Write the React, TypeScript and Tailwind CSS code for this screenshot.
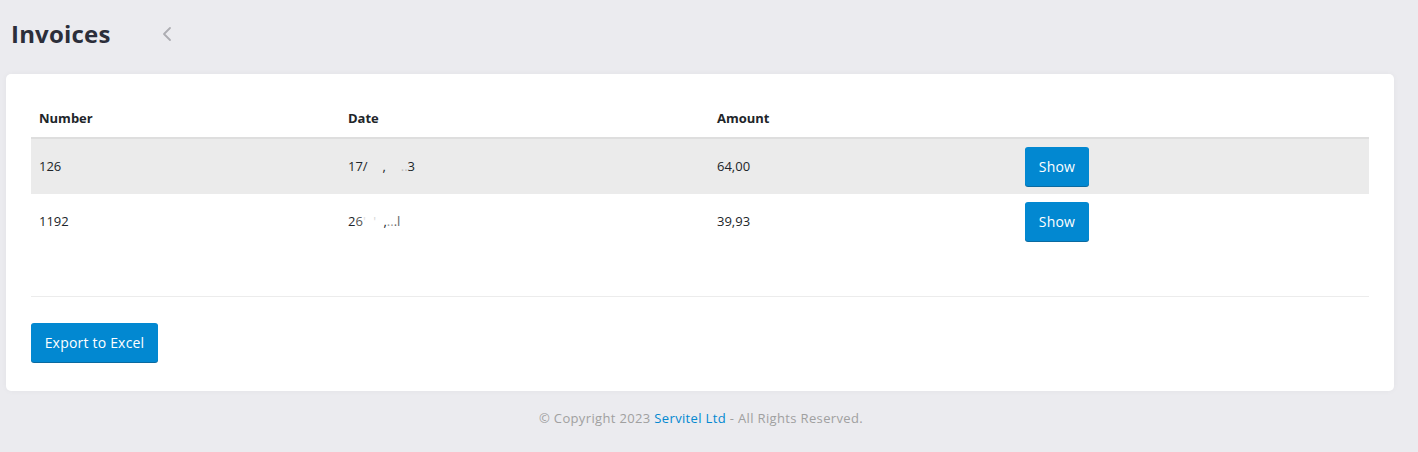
import React from "react";

const font = { fontFamily: '"Open Sans", "Noto Sans", sans-serif' };

function ShowBtn() {
  return (
    <button className="h-[39px] w-[64px] rounded-[3px] bg-[#0288d1] text-[14px] tracking-[0.2px] text-white shadow-[0_1px_0_#0a6aa0]">
      Show
    </button>
  );
}

export default function App() {
  return (
    <div className="min-h-[452px] w-full bg-[#ebebef] text-[#212529]" style={font}>
      <div className="flex h-[74px] items-center pl-[11px] pb-[6px]">
        <h1 className="text-[24px] font-bold leading-none tracking-[0.2px] text-[#2c2e3a]">Invoices</h1>
        <svg className="ml-[50px]" width="12" height="16" viewBox="0 0 12 16" fill="none">
          <path d="M9 2 L3 8 L9 14" stroke="#adadb2" strokeWidth="1.8" strokeLinecap="round" strokeLinejoin="round" />
        </svg>
      </div>
      <div className="mx-[6px] mr-[24px] rounded-[5px] bg-white px-[25px] pt-[26px] pb-[29px] shadow-[0_0_6px_rgba(0,0,0,0.04)]">
        <table className="w-full border-collapse text-left text-[13px]">
          <thead>
            <tr className="border-b-2 border-[#dedede]">
              <th className="h-[38px] w-[309px] px-[8px] font-bold text-[#212529]">Number</th>
              <th className="w-[369px] px-[8px] font-bold text-[#212529]">Date</th>
              <th className="w-[308px] px-[8px] font-bold text-[#212529]">Amount</th>
              <th className="px-[8px]"></th>
            </tr>
          </thead>
          <tbody>
            <tr className="bg-[#ebebeb]">
              <td className="h-[55px] px-[8px]">126</td>
              <td className="px-[8px]">
                17/<span className="text-[#ebebeb]">0</span>
                <span className="text-[#ebebeb]">5</span>,<span className="text-[#ebebeb]">20</span>
                <span className="text-[#bdbdbd]">..</span>3
              </td>
              <td className="px-[8px]">64,00</td>
              <td className="px-[8px] py-[8px]"><ShowBtn /></td>
            </tr>
            <tr>
              <td className="h-[55px] px-[8px]">1192</td>
              <td className="px-[8px]">
                2<span className="text-[#555]">6</span>
                <span className="text-[#e0e0e0]">'</span>
                <span className="text-white">1</span>
                <span className="text-[#d8d8d8]">'</span>
                <span className="text-white">0</span>,<span className="text-[#999]">..</span>
                <span className="text-[#666]">.l</span>
              </td>
              <td className="px-[8px]">39,93</td>
              <td className="px-[8px] py-[8px]"><ShowBtn /></td>
            </tr>
          </tbody>
        </table>
        <div className="mt-[47px] border-t border-[#ececec]" />
        <button className="mt-[26px] h-[39px] w-[127px] rounded-[3px] bg-[#0288d1] text-[14px] tracking-[0.2px] text-white shadow-[0_1px_0_#0a6aa0]">
          Export to Excel
        </button>
      </div>
      <div className="flex h-[55px] items-center justify-center pr-[16px] text-[13px] tracking-[0.35px] text-[#a0a0a0]">
        © Copyright 2023&nbsp;<span className="text-[#0288d1]">Servitel Ltd</span>&nbsp;- All Rights Reserved.
      </div>
    </div>
  );
}
